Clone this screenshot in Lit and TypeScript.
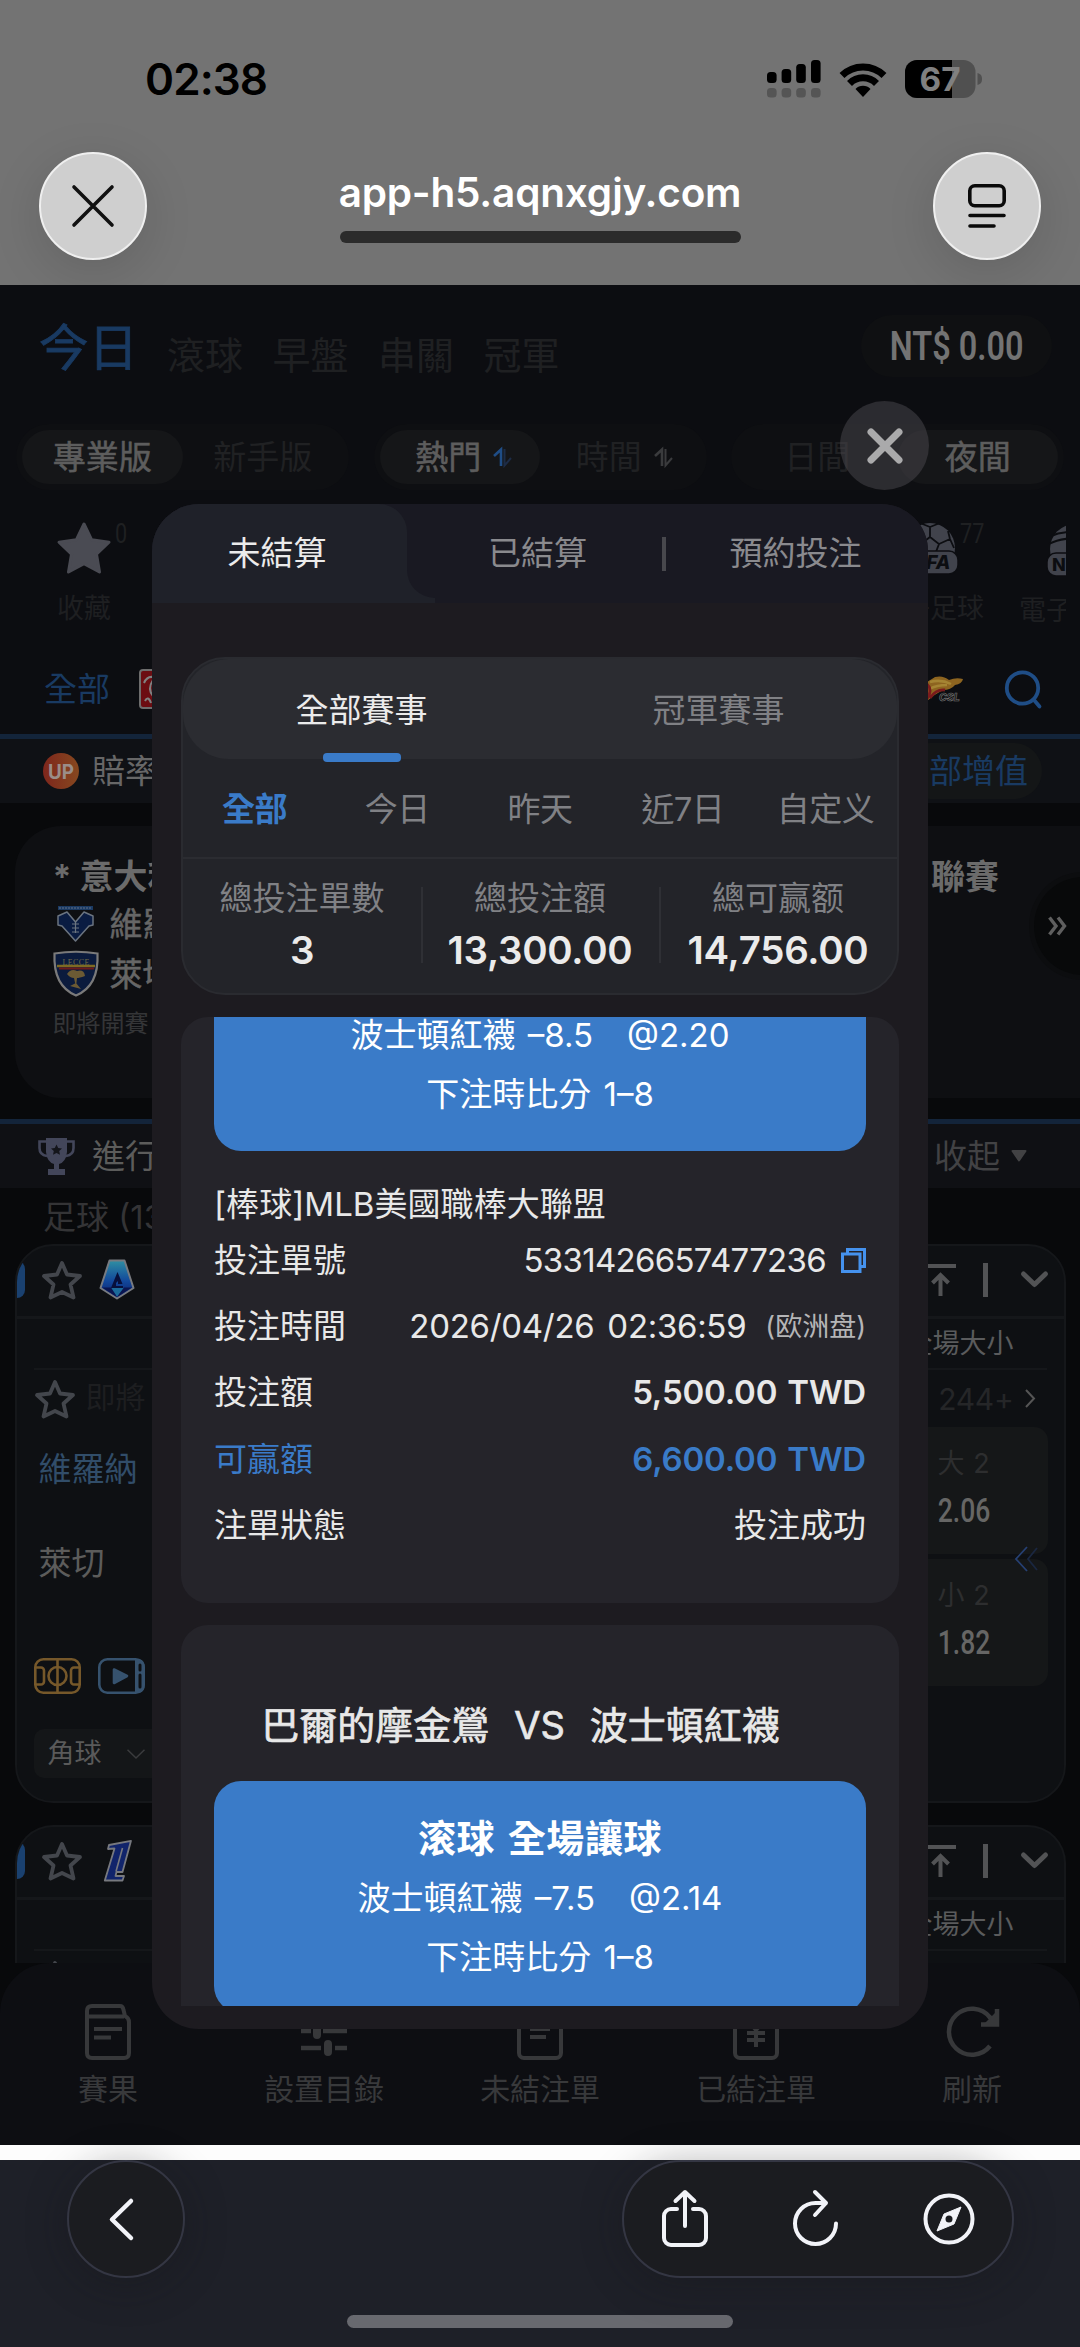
import { LitElement, html, svg, css, nothing } from "lit";
import { customElement, property } from "lit/decorators.js";

const base = css`
  * { box-sizing: border-box; }
  :host {
    display: block;
    font-family: Inter, "Noto Sans CJK TC", sans-serif;
    font-size: 33px;
    line-height: 1;
    white-space: nowrap;
  }
  svg { display: block; flex: none; overflow: visible; }
`;

/* ---------- Browser chrome, top ---------- */
@customElement("browser-top")
class BrowserTop extends LitElement {
  static styles = [base, css`
    :host { height: 285px; background: #737373; overflow: hidden; }
    .status { display: flex; align-items: center; height: 158px; padding: 0 98px 0 145px; justify-content: space-between; }
    .time { font-size: 44px; font-weight: 600; color: #000; letter-spacing: -0.9px; line-height: 48px; }
    .indicators { display: flex; align-items: center; gap: 18px; }
    .bar { display: flex; align-items: flex-start; justify-content: space-between; padding: 0 39px; margin-top: -6px; }
    .round {
      width: 108px; height: 108px; border-radius: 50%; background: #cfcfcf; border: 2px solid #efefef;
      display: flex; align-items: center; justify-content: center; box-shadow: 0 12px 50px rgba(0,0,0,.13);
    }
    .address { display: flex; flex-direction: column; align-items: center; width: 402px; padding-top: 17px; }
    .url { font-size: 40.500px; font-weight: 600; color: #fff; letter-spacing: -0.2px; line-height: 48px; }
    .progress { width: 401px; height: 12px; border-radius: 6px; background: #2b2b2b; margin-top: 14px; }
  `];
  render() {
    return html`
      <div class="status">
        <span class="time">02:38</span>
        <div class="indicators">
          <svg width="54" height="38" viewBox="0 0 54 38">
            ${[[0, 12], [14.6, 9], [29.2, 4], [44, 0]].map(([x, y]) => svg`
              <rect x=${x} y=${y} width="9.6" height=${23 - y} rx="3.5" fill="#000"/>
              <rect x=${x} y="28" width="9.6" height="9.5" rx="3.5" fill="#555"/>`)}
          </svg>
          <svg width="48" height="36" viewBox="0 0 48 36" fill="none" stroke="#000" stroke-width="7">
            <path d="M3 14.5A30 30 0 0 1 45 14.5"/>
            <path d="M10.5 22.5A19 19 0 0 1 37.5 22.5"/>
            <path d="M24 36L16.5 28A10.5 10.5 0 0 1 31.500 28Z" fill="#000" stroke="none"/>
          </svg>
          <svg width="77" height="38" viewBox="0 0 77 38">
            <rect width="70.500" height="38" rx="12" fill="#505050"/>
            <path d="M12 0H47V38H12A12 12 0 0 1 0 26V12A12 12 0 0 1 12 0Z" fill="#000"/>
            <path d="M72.500 13C76 14 77 16 77 19S76 24 72.500 25Z" fill="#505050"/>
            <text x="35" y="31" font-size="33" font-weight="700" fill="#808080" text-anchor="middle" textLength="41" lengthAdjust="spacingAndGlyphs">67</text>
          </svg>
        </div>
      </div>
      <div class="bar">
        <div class="round">
          <svg width="42" height="42" viewBox="0 0 42 42" stroke="#111" stroke-width="3.600" stroke-linecap="round"><path d="M2 2L40 40M40 2L2 40"/></svg>
        </div>
        <div class="address"><span class="url">app-h5.aqnxgjy.com</span><div class="progress"></div></div>
        <div class="round">
          <svg width="38" height="45" viewBox="0 0 38 45" fill="none" stroke="#0a0a0a" stroke-width="3.600" stroke-linecap="round">
            <rect x="1.800" y="1.800" width="34.400" height="20" rx="5"/><path d="M2 31.500H36M2 42H26"/>
          </svg>
        </div>
      </div>`;
  }
}

/* ---------- Browser chrome, bottom ---------- */
@customElement("browser-bottom")
class BrowserBottom extends LitElement {
  static styles = [base, css`
    :host { height: 202px; background: #1e2028; border-top: 15px solid #fdfdfd; }
    .tools { display: flex; justify-content: space-between; padding: 0 66px 0 67px; }
    .glass {
      height: 118px; border-radius: 59px; background: #1b1c20; border: 2px solid #343643;
      display: flex; align-items: center; box-shadow: 0 6px 40px rgba(20,20,24,.35);
    }
    .back { width: 118px; justify-content: center; padding-right: 10px; }
    .group { width: 392px; padding: 0 37px 0 38px; justify-content: space-between; }
    .home { width: 386px; height: 13px; border-radius: 7px; background: #68696f; margin: 37px auto 0; }
  `];
  render() {
    return html`
      <div class="tools">
        <div class="glass back">
          <svg width="25" height="43" viewBox="0 0 25 43" fill="none" stroke="#f2f3f8" stroke-width="4.500" stroke-linecap="round" stroke-linejoin="round"><path d="M22 3L3 21.500L22 40"/></svg>
        </div>
        <div class="glass group">
          <svg width="46" height="58" viewBox="0 0 46 58" fill="none" stroke="#f2f3f8" stroke-width="4" stroke-linecap="round" stroke-linejoin="round">
            <path d="M15 19H9A7 7 0 0 0 2 26V48A7 7 0 0 0 9 55H37A7 7 0 0 0 44 48V26A7 7 0 0 0 37 19H31M23 36V2.500M13.500 11L23 2L32.500 11"/>
          </svg>
          <svg width="46" height="58" viewBox="0 0 46 58" fill="none" stroke="#f2f3f8" stroke-width="4" stroke-linecap="round" stroke-linejoin="round">
            <path d="M43 33.500A20.500 20.500 0 1 1 22.500 13H33M22 2L33 13L22 25"/>
          </svg>
          <svg width="52" height="52" viewBox="0 0 52 52" fill="none" stroke="#f2f3f8" stroke-width="4">
            <circle cx="26" cy="26" r="23.500"/>
            <path d="M38 14L31 31L14 38L21 21Z" fill="#f2f3f8" stroke-width="1" stroke-linejoin="round"/>
            <circle cx="26" cy="26" r="3.500" fill="#1b1c20" stroke="none"/>
          </svg>
        </div>
      </div>
      <div class="home"></div>`;
  }
}

/* ---------- Icons of the sports page ---------- */
const STAR = "M25.500 2L33 17.500L50 19.800L37.700 31.500L40.700 49L25.500 40.800L10.300 49L13.300 31.500L1 19.800L18 17.500Z";
const starOutline = html`<svg width="42" height="40" viewBox="0 0 42 40" fill="none" stroke="#43464c" stroke-width="3.800" stroke-linejoin="round">
  <path d="M21 3L26 14.500L39 16L29.500 24.500L32.500 37.500L21 32L9.500 37.500L12.500 24.500L3 16L16 14.500Z"/></svg>`;
const sortIcon = (a: string, b: string) => html`<svg width="19" height="19" viewBox="0 0 19 19" fill="none" stroke-width="2.600">
  <path d="M1 8L8 1.500V18" stroke=${a}/><path d="M11.500 1V17.500L18 10" stroke=${b} stroke-width="2"/></svg>`;

/* ---------- League block with its first match ---------- */
@customElement("league-card")
class LeagueCard extends LitElement {
  @property() logo = "serie-a";
  @property({ type: Boolean }) cut = false;
  static styles = [base, css`
    :host { width: 1051px; height: 559px; margin-left: 14.500px; border: 2px solid #15171a; border-radius: 38px; background: #0e1013; overflow: hidden; flex: none; }
    :host([cut]) { height: 138px; border-radius: 38px 38px 0 0; border-bottom: 0; }
    .head { display: flex; align-items: center; height: 73px; padding-bottom: 3px; border-bottom: 3px solid #15171a; }
    .tab { width: 8px; height: 37px; background: #1a4170; border-radius: 0 8px 8px 0; }
    .star { margin-left: 16px; }
    .logo { margin-left: 16px; }
    .acts { display: flex; align-items: center; margin-left: auto; padding-right: 16px; }
    .up { margin-right: 27px; } .sep { width: 5px; height: 34px; background: #525355; margin-right: 33px; }
    .market { display: flex; justify-content: flex-end; align-items: center; height: 51px; margin: 0 17px; padding-right: 33px; border-bottom: 2px solid #15171a; color: #5a5b5c; font-size: 27px; }
    .info { display: flex; align-items: center; height: 57px; margin: 0 17px; padding-right: 12px; }
    .soon { font-size: 30px; color: #1d1e20; margin-left: 10px; padding-bottom: 4px; line-height: 40px; }
    .more { margin-left: auto; color: #252628; font-size: 30px; letter-spacing: -0.3px; padding-right: 11px; }
    .body { display: flex; justify-content: space-between; height: 259px; padding: 0 16px 0 22px; }
    .teams { display: grid; grid-template-rows: 84px 105px; align-items: center; }
    .home { color: #314d69; } .away { color: #5c5c5b; }
    .odds { display: flex; flex-direction: column; gap: 5px; width: 168px; }
    .cell { height: 127.500px; border-radius: 14px; background: #151718; display: flex; flex-direction: column; align-items: flex-start; padding: 22px 0 0 58px; gap: 16px; }
    .line { font-size: 27px; color: #2d2e2f; line-height: 30px; letter-spacing: .6px; }
    .price { font-family: Roboto, sans-serif; font-size: 34px; font-weight: 500; color: #666665; line-height: 30px; transform: scaleX(.78); width: 52px; display: flex; justify-content: center; }
    .media { display: flex; gap: 17px; padding: 0 0 0 17px; margin-top: -28px; }
    .corner { display: flex; align-items: center; justify-content: space-between; width: 150px; height: 49px; margin: 35px 0 0 17px; border-radius: 10px; background: #141618; padding: 0 39px 0 14px; font-size: 27px; color: #5a5a5a; }
  `];
  private logoArt() {
    return this.logo === "serie-a"
      ? html`<svg class="logo" width="36" height="41" viewBox="0 0 36 41">
          <defs><linearGradient id="a" x1="0" y1="0" x2="0" y2="1"><stop offset="0" stop-color="#2f8fa3"/><stop offset=".55" stop-color="#12479b"/><stop offset="1" stop-color="#0c1c66"/></linearGradient></defs>
          <path d="M10.500 1.500H25.500L34.500 29L18 39.500L1.500 29Z" fill="url(#a)" stroke="#777a80" stroke-width="2" stroke-linejoin="round"/>
          <path d="M18.500 13L23.500 25H19V22L17 24V27H24V29H12Z" fill="#07103c"/><path d="M12 29H25L18 38Z" fill="#1b6a9a"/><path d="M3 28.500H12L18 38Z" fill="#0a1550"/><path d="M33 28.500H25L18 38Z" fill="#0a1550"/>
        </svg>`
      : html`<svg class="logo" width="36" height="42" viewBox="-5 0 36 42">
          <path d="M5 5L27 .800L18.500 32H12.500L11.500 36H20L18.500 40.500H.800L10.500 8.500L4 9Z" fill="#11246b" stroke="#77797f" stroke-width="1.800" stroke-linejoin="round"/>
          <path d="M18.500 8L12 31.500" stroke="#77797f" stroke-width="1.600"/>
        </svg>`;
  }
  render() {
    return html`
      <div class="head">
        <div class="tab"></div><div class="star">${starOutline}</div>${this.logoArt()}
        <div class="acts">
          <svg class="up" width="31" height="32" viewBox="0 0 31 32" fill="none" stroke="#525355" stroke-width="4"><path d="M0 2H31M15.500 32V11M7.500 19L15.500 11L23.500 19" /></svg>
          <div class="sep"></div>
          <svg width="27" height="17" viewBox="0 0 27 17" fill="none" stroke="#525355" stroke-width="5" stroke-linecap="round" stroke-linejoin="round"><path d="M2.500 3L13.500 13.500L24.500 3"/></svg>
        </div>
      </div>
      <div class="market">全場大小</div>
      <div class="info">${starOutline}${this.cut ? nothing : html`<span class="soon">即將</span><span class="more">244+</span>
        <svg width="10" height="19" viewBox="0 0 10 19" fill="none" stroke="#555" stroke-width="2"><path d="M1 1L9 9.500L1 18"/></svg>`}</div>
      ${this.cut ? nothing : html`
        <div class="body">
          <div class="teams"><span class="home">維羅納</span><span class="away">萊切</span></div>
          <div class="odds">
            <div class="cell"><span class="line">大 2</span><span class="price">2.06</span></div>
            <div class="cell"><span class="line">小 2</span><span class="price">1.82</span></div>
          </div>
        </div>
        <div class="media">
          <svg width="47" height="36" viewBox="0 0 47 36" fill="none" stroke="#76582a" stroke-width="2.600">
            <rect x="1.300" y="1.300" width="44.400" height="33.400" rx="8"/><path d="M23.500 1V35M1 9.500H7A3 3 0 0 1 10 12.500V23.500A3 3 0 0 1 7 26.500H1M46 9.500H40A3 3 0 0 0 37 12.500V23.500A3 3 0 0 0 40 26.500H46"/><circle cx="23.500" cy="18" r="9"/>
          </svg>
          <svg width="47" height="36" viewBox="0 0 47 36" fill="none" stroke="#36526e" stroke-width="2.600">
            <rect x="1.300" y="1.300" width="44.400" height="33.400" rx="8"/><path d="M38 2H41Q46 3 45.700 10V27Q46 33 41 34H38Z" fill="#36526e" stroke-width="2"/><path d="M42 7V12M42 17V29" stroke="#0e1013" stroke-width="3" stroke-linecap="round"/><path d="M16 11.500L29 18L16 25Z" fill="#36526e" stroke-linejoin="round"/>
          </svg>
        </div>
        <div class="corner">角球<svg width="18" height="10" viewBox="0 0 18 10" fill="none" stroke="#3a3b3d" stroke-width="1.500"><path d="M.5 .8L9 9L17.500 .8"/></svg></div>`}
    `;
  }
}

/* ---------- Dimmed sports page ---------- */
@customElement("sports-page")
class SportsPage extends LitElement {
  static styles = [base, css`
    :host { height: 1860px; background: #08090b; overflow: hidden; display: flex; flex-direction: column; }
    .top { height: 449px; background: #0c0d11; flex: none; }
    .nav { display: flex; align-items: center; height: 125px; padding: 0 28px 0 39px; }
    .nav .on { font-size: 49.500px; color: #193a62; -webkit-text-stroke: .8px #193a62; margin: 2px 30px 0 0; width: 98px; }
    .nav .off { font-size: 38px; color: #1f2022; margin: 14px 29.500px 0 0; }
    .balance { margin: -3px 0 0 auto; width: 191px; height: 62px; border-radius: 31px; background: #0f1012; display: flex; align-items: center; justify-content: center; }
    .balance span { font-family: Roboto, sans-serif; font-weight: 600; font-size: 41px; color: #737373; transform: scaleX(.79); }
    .modes { display: flex; align-items: center; height: 66px; margin-top: 14px; padding: 0 16px; justify-content: space-between; }
    .seg { display: flex; width: 333px; height: 66px; border-radius: 33px; background: #0e0f12; padding: 6px; }
    .seg div { flex: 1; height: 54px; border-radius: 27px; display: flex; align-items: center; justify-content: center; gap: 12px; color: #202123; }
    .seg .on { background: #151618; color: #5d5d5d; -webkit-text-stroke: .6px #5d5d5d; }
    .sort div { padding-left: 8px; }
    .sports { display: flex; justify-content: space-between; height: 154px; padding: 32px 14px 0 14px; }
    .sport { display: flex; flex-direction: column; align-items: center; position: relative; font-size: 27px; color: #1e1f21; gap: 20px; width: 140px; flex: none; }
    .sport .n { position: absolute; left: 101px; top: 0; font-size: 27px; font-family: Roboto; transform: scaleX(.8); transform-origin: 0 0; color: #1f2022; line-height: 24px; }
    .sport svg { margin-bottom: 1px; }
    .right { display: flex; width: 207px; overflow: hidden; }
    .right .sport { width: 142px; } .right .n { left: 101px; }
    .right .next-sport { align-items: flex-start; padding-left: 18px; }
    .next-sport svg { margin-left: 28px; }
    .leagues { display: flex; align-items: center; height: 90px; padding: 0 38px 0 44px; color: #193a62; }
    .leagues .red { margin: 0 auto 0 29px; }
    .leagues .find { margin-left: 41px; }
    .rule { height: 5px; background: #13243a; flex: none; }
    .boost { display: flex; align-items: center; height: 64px; background: #0f1115; flex: none; padding: 0 38px 0 42px; color: #676767; }
    .boost span { margin-left: 12px; }
    .boost .all { margin-left: auto; height: 56px; border-radius: 28px; background: #141617; color: #193a62; display: flex; align-items: center; padding: 0 14px; width: 140px; justify-content: flex-end; }
    .hot { height: 272px; margin: 23px 0 21px 14.500px; background: #0e0f12; border-radius: 46px 0 0 46px; padding: 33px 0 0 38px; position: relative; flex: none; }
    .hot .title { display: flex; height: 36px; align-items: center; color: #6b6b6b; font-size: 34px; font-weight: 700; padding-right: 81px; justify-content: space-between; margin-bottom: 4px; }
    .team { display: flex; align-items: center; height: 50px; font-size: 33px; color: #666; -webkit-text-stroke: .5px #666; }
    .team svg { margin-right: 11px; }
    .hot .soon { font-size: 24px; color: #343537; margin-top: 9px; line-height: 32px; }
    .next { position: absolute; right: -52px; top: 51px; width: 98px; height: 98px; border-radius: 50%; background: #08090a; box-shadow: 0 0 0 5px #0c0d0f; padding: 39px 0 0 14px; }
    .section { display: flex; align-items: center; height: 64px; background: #0f1014; flex: none; padding: 0 53px 0 38px; color: #5c5c5b; }
    .section .name { margin-left: 17px; }
    .section .fold { margin-left: auto; color: #424244; display: flex; align-items: center; gap: 11px; }
    .count { height: 56px; display: flex; align-items: center; padding: 2px 0 0 43px; color: #343436; flex: none; font-size: 33px; }
    .gap { height: 22px; flex: none; }
    .tabs { flex: none; height: 183px; background: #0d0e12; border-radius: 50px 50px 0 0; display: grid; grid-template-columns: repeat(5, 1fr); padding-top: 41px; }
    .tabs div { display: flex; flex-direction: column; align-items: center; gap: 12px; font-size: 30px; color: #38393b; line-height: 34px; letter-spacing: -.1px; }
  `];
  render() {
    const ic = "#37383a";
    return html`
      <div class="top">
        <div class="nav">
          <span class="on">今日</span><span class="off">滾球</span><span class="off">早盤</span><span class="off">串關</span><span class="off">冠軍</span>
          <div class="balance"><span>NT$ 0.00</span></div>
        </div>
        <div class="modes">
          <div class="seg"><div class="on">專業版</div><div>新手版</div></div>
          <div class="seg sort"><div class="on">熱門${sortIcon("#1f4d86", "#1d2c46")}</div><div>時間${sortIcon("#3a3b3d", "#3a3b3d")}</div></div>
          <div class="seg"><div>日間</div><div class="on">夜間</div></div>
        </div>
        <div class="sports">
          <div class="sport">
            <svg width="52" height="52" viewBox="0 0 51 51"><path d=${STAR} fill="#4a4b53" stroke="#4a4b53" stroke-width="3" stroke-linejoin="round"/></svg>
            收藏<span class="n">0</span>
          </div>
          <div class="right">
            <div class="sport">
              <svg width="56" height="52" viewBox="0 0 56 52">
                <circle cx="28" cy="26" r="25" fill="#41434c"/>
                <g fill="none" stroke="#0c0d11" stroke-width="1.800"><path d="M28 15L37 22L33.500 31H22L19 22ZM28 15V5M37 22L48 17M19 22L8 17M28 5L18 1M28 5L38 1M48 17L52 26M48 17L46 9M8 17L4 26M8 17L10 9"/></g>
                <rect x="0" y="29" width="56" height="23" rx="9" fill="#41434c" stroke="#0c0d11" stroke-width="1.500"/>
                <text x="28" y="47" text-anchor="middle" font-size="19" font-weight="800" font-style="italic" fill="#0c0d11">FIFA</text>
              </svg>
              電子足球<span class="n">77</span>
            </div>
            <div class="sport next-sport">
              <svg width="56" height="54" viewBox="0 0 56 54">
                <circle cx="28" cy="27" r="25" fill="#41434c"/>
                <path d="M2 22Q20 12 54 20M4 14Q22 6 50 14" fill="none" stroke="#0c0d11" stroke-width="2"/>
                <rect x="0" y="31" width="56" height="23" rx="9" fill="#41434c" stroke="#0c0d11" stroke-width="1.500"/>
                <text x="5" y="49" font-size="18" font-weight="800" fill="#0c0d11">NB</text>
              </svg>
              電子
            </div>
          </div>
        </div>
        <div class="leagues">
          <span>全部</span>
          <svg class="red" width="36" height="40" viewBox="0 0 36 40"><rect x="1" y="1" width="34" height="38" rx="3" fill="#6c0d12" stroke="#6d6d6d" stroke-width="2"/><path d="M5 14Q8 7 14 8M6 32Q9 26 12 34M14 11Q8 20 14 27" fill="none" stroke="#808080" stroke-width="2"/></svg>
          <svg width="37" height="26" viewBox="0 0 37 26">
            <path d="M0 6Q5 3 8 1Q16 -1 22 4Q29 1 36 3Q35 8 28 9Q24 14 16 14Q8 18 0 25Z" fill="#8d6420"/>
            <path d="M3 6Q14 3 24 8M2 13Q10 9 20 9" stroke="#a58433" stroke-width="2.500" fill="none"/>
            <path d="M0 8Q6 14 0 23M3 22Q9 13 18 14" stroke="#7b1a1c" stroke-width="2.800" fill="none"/>
            <text x="12" y="25" font-size="10.500" font-weight="800" font-style="italic" fill="#111" stroke="#777" stroke-width=".6">CSL</text>
          </svg>
          <svg class="find" width="37" height="39" viewBox="0 0 37 39" fill="none" stroke="#1f4d86" stroke-width="3.800" stroke-linecap="round"><circle cx="17.500" cy="18" r="15.700"/><path d="M29 30L34.500 36.500"/></svg>
        </div>
      </div>
      <div class="rule"></div>
      <div class="boost">
        <svg width="38" height="38" viewBox="0 0 38 38">
          <defs><linearGradient id="u" x1="0" y1="0" x2="1" y2="0"><stop offset="0" stop-color="#7e261c"/><stop offset="1" stop-color="#86481f"/></linearGradient></defs>
          <circle cx="19" cy="19" r="18" fill="url(#u)"/><text x="19" y="26.500" font-size="20" font-weight="700" fill="#9a8d88" text-anchor="middle" textLength="26" lengthAdjust="spacingAndGlyphs">UP</text>
        </svg>
        <span>賠率</span><div class="all">部增值</div>
      </div>
      <div class="hot">
        <div class="title"><span>* 意大利</span><span>聯賽</span></div>
        <div class="team">
          <svg width="46" height="36" viewBox="0 0 46 36">
            <rect x="5" y="0" width="35" height="4" fill="#1a3a63"/><path d="M6 2H39" stroke="#62708a" stroke-width="1.200" stroke-dasharray="2 1"/>
            <path d="M14 6L22.500 16L31 6L40 10V19L36 20L22.500 35L9 20L5 19V10Z" fill="#0a1c42" stroke="#6b7480" stroke-width="1.500" stroke-linejoin="round"/>
            <path d="M22.500 16V27M19 18H26M19 22H26M19 26H26" stroke="#6b7480" stroke-width="1.200"/>
          </svg>維羅
        </div>
        <div class="team">
          <svg width="46" height="46" viewBox="0 0 46 46">
            <path d="M1.500 2.500Q23-1 44.500 2.500Q46 35 23 44.500Q0 35 1.500 2.500Z" fill="#0b1b3d" stroke="#7a7a7a" stroke-width="2.200"/>
            <path d="M4 15H42" stroke="#7d6a22" stroke-width="2.500"/><path d="M6 17.500H41" stroke="#6c1b1b" stroke-width="2"/>
            <text x="23" y="13.500" font-family="Liberation Serif" font-size="8" fill="#6e6a4a" text-anchor="middle" textLength="27">LECCE</text>
            <path d="M14 23Q18 17 24 20Q31 18 32 25Q26 27 24 27L23 36L21 27Q17 27 14 23ZM17 35L23 32L28 38" fill="#6b5a34"/>
          </svg>萊切
        </div>
        <div class="soon">即將開賽</div>
        <div class="next"><svg width="19" height="20" viewBox="0 0 19 20" fill="none" stroke="#5f5f5f" stroke-width="3.400"><path d="M1.500 1.500L8 10L1.500 18.500M10 1.500L16.500 10L10 18.500"/></svg></div>
      </div>
      <div class="rule"></div>
      <div class="section">
        <svg width="37" height="37" viewBox="0 0 37 37" fill="#43465a">
          <path d="M8 0H29V14Q28 24 21 26V31H27V37H10V31H16V26Q9 24 8 14Z"/><path d="M8 3.500H1.500V10Q1.500 17 9 18M29 3.500H35.500V10Q35.500 17 28 18" fill="none" stroke="#43465a" stroke-width="2.600"/>
          <path d="M18.500 6.500L20.200 10L24 10.400L21.200 13L22 16.800L18.500 15L15 16.800L15.800 13L13 10.400L16.800 10Z" fill="#14151b"/>
        </svg>
        <span class="name">進行</span>
        <span class="fold">收起<svg width="16" height="12" viewBox="0 0 16 12"><path d="M1.500 1H14.500L8 10.500Z" fill="#424244" stroke="#424244" stroke-width="2" stroke-linejoin="round"/></svg></span>
      </div>
      <div class="count">足球 (13</div>
      <league-card></league-card>
      <div class="gap"></div>
      <league-card logo="ligue-1" cut></league-card>
      <div class="tabs">
        <div><svg width="46" height="56" viewBox="0 0 46 56" fill="none" stroke=${ic} stroke-width="4"><path d="M7 2H35Q38 2 38.500 6L40 12Q44 14 44 18V49Q44 54 39 54H7Q2 54 2 49V7Q2 2 7 2ZM3 12.500H39M9 25H37M9 33.500H26"/></svg>賽果</div>
        <div><svg width="46" height="56" viewBox="0 0 46 56" fill="none" stroke=${ic} stroke-width="4.500"><path d="M0 11H12M20 11H46M0 27H10M22 27H46M0 44H20M34 44H46"/><path d="M16 22V31M27 40V48" stroke-width="8" stroke-linecap="round"/></svg>設置目錄</div>
        <div><svg width="46" height="56" viewBox="0 0 46 56" fill="none" stroke=${ic} stroke-width="4"><rect x="2" y="2" width="42" height="52" rx="5"/><path d="M13 25H33M13 33H29"/></svg>未結注單</div>
        <div><svg width="46" height="56" viewBox="0 0 46 56" fill="none" stroke=${ic} stroke-width="4"><rect x="2" y="2" width="42" height="52" rx="5"/><path d="M23 20V43M14 29H32M14 36H32M15 17L23 26L31 17"/></svg>已結注單</div>
        <div><svg width="54" height="56" viewBox="0 0 54 56" fill="none" stroke=${ic} stroke-width="4.500"><path d="M45 42A23 23 0 1 1 45 13.500L51 19M52 5V20.500H36"/><path d="M51 8V19H40Z" fill=${ic} stroke="none"/></svg>刷新</div>
      </div>`;
  }
}

/* ---------- Bet history dialog ---------- */
@customElement("bet-dialog")
class BetDialog extends LitElement {
  static styles = [base, css`
    :host { width: 776px; height: 1525px; border-radius: 47px; background: #1d1b20; color: #e8e8e8; overflow: hidden; }
    .heads { height: 99px; background: #191922; position: relative; display: grid; grid-template-columns: 250px 271px 245px; }
    .heads svg { position: absolute; left: 0; top: 0; }
    .heads div { display: flex; align-items: center; justify-content: center; color: #8a8a8e; position: relative; }
    .heads .on { color: #ebebeb; }
    .heads i { position: absolute; left: 510px; top: 33px; width: 4px; height: 34px; background: #48484d; }
    .filter { margin: 54px 29px 0; height: 338px; border: 2px solid #2a2b30; border-radius: 44px; background: #232429; display: flex; flex-direction: column; }
    .kinds { display: flex; height: 100px; background: #2b2c31; border-radius: 46px; }
    .kinds div { flex: 1; display: flex; align-items: center; justify-content: center; color: #808185; position: relative; padding-top: 3px; }
    .kinds .on { color: #ebebeb; }
    .kinds .on::after { content: ""; position: absolute; left: 50%; margin-left: -39px; bottom: -3px; width: 78px; height: 9px; border-radius: 4px; background: #3a7bc8; }
    .days { display: grid; grid-template-columns: repeat(5, 1fr); height: 100px; border-bottom: 2px solid #2b2c31; align-items: center; text-align: center; color: #808185; letter-spacing: -.5px; padding: 2px 0 0; }
    .days .on { color: #3a7bc8; font-weight: 700; }
    .sums { display: grid; grid-template-columns: repeat(3, 1fr); padding: 22px 0 0; }
    .sums div { display: flex; flex-direction: column; align-items: center; position: relative; gap: 12px; color: #808185; line-height: 34px; height: 82px; }
    .sums div + div::before { content: ""; position: absolute; left: 0; top: 6px; height: 76px; width: 2px; background: #2f3035; }
    .sums b { font-size: 38.500px; font-weight: 600; color: #ebebeb; line-height: 46px; letter-spacing: -.3px; }
    .list { margin: 22px 29px 0; height: 989px; overflow: hidden; border-radius: 27px 27px 0 0; display: flex; flex-direction: column; gap: 22px; justify-content: flex-start; }
    .card { background: #25242a; border-radius: 27px; padding: 0 33px; flex: none; }
    .first { height: 586px; border-radius: 0 0 27px 27px; }
    .second { height: 500px; padding-top: 71px; }
    .pick { background: #3a7bc8; border-radius: 27px; color: #fff; text-align: center; line-height: 59px; height: 232px; padding-top: 28px; display: flow-root; word-spacing: 3px; }
    .first .pick { height: 134px; border-radius: 0 0 27px 27px; padding-top: 0; }
    .first .pick div:first-child { margin-top: -11px; }
    .pick .kind { font-size: 38px; font-weight: 700; line-height: 58px; margin-bottom: 2px; letter-spacing: .6px; }
    .pick .n { letter-spacing: 0; }
    .pick .od { margin-left: 34px; }
    .league { margin-top: 34px; line-height: 38px; letter-spacing: .05px; }
    .row { display: flex; align-items: center; justify-content: space-between; height: 66.300px; }
    .rows { margin-top: 4px; }
    .num { letter-spacing: -.7px; display: flex; align-items: center; gap: 15px; }
    .when { letter-spacing: -.3px; word-spacing: 4px; }
    .zone { font-size: 27px; color: #b5b5b7; letter-spacing: 0; margin-left: 4px; }
    .money { font-weight: 600; letter-spacing: -.2px; word-spacing: 2px; }
    .win { color: #3a7bc8; }
    .teams { display: flex; justify-content: center; gap: 25px; font-size: 38px; line-height: 58px; margin-bottom: 27px; -webkit-text-stroke: .7px #e8e8e8; padding-right: 39px; }
  `];
  private pick(line: string, odds: string) {
    return html`<div>波士頓紅襪 <span class="n">${line}</span><span class="n od">${odds}</span></div><div>下注時比分 <span class="n">1–8</span></div>`;
  }
  render() {
    return html`
      <div class="heads">
        <svg width="284" height="99" viewBox="0 0 284 99"><path d="M0 0H227A28 28 0 0 1 255 28V66A28 28 0 0 0 283 94V99H0Z" fill="#1f2129"/></svg>
        <div class="on">未結算</div><div>已結算</div><div>預約投注</div><i></i>
      </div>
      <div class="filter">
        <div class="kinds"><div class="on">全部賽事</div><div>冠軍賽事</div></div>
        <div class="days"><span class="on">全部</span><span>今日</span><span>昨天</span><span>近7日</span><span>自定义</span></div>
        <div class="sums">
          <div>總投注單數<b>3</b></div><div>總投注額<b>13,300.00</b></div><div>總可赢额<b>14,756.00</b></div>
        </div>
      </div>
      <div class="list">
        <div class="card first">
          <div class="pick">${this.pick("–8.5", "@2.20")}</div>
          <div class="league">[棒球]MLB美國職棒大聯盟</div>
          <div class="rows">
            <div class="row"><span>投注單號</span><span class="num">5331426657477236
              <svg width="25" height="25" viewBox="0 0 25 25" fill="none" stroke="#4592ee" stroke-width="3"><rect x="1.500" y="6" width="17.500" height="17.500"/><path d="M6.500 6V1.500H23.500V18.500H19"/></svg></span></div>
            <div class="row"><span>投注時間</span><span class="num when">2026/04/26 02:36:59<span class="zone">(欧洲盘)</span></span></div>
            <div class="row"><span>投注額</span><span class="money">5,500.00 TWD</span></div>
            <div class="row win"><span>可贏額</span><span class="money">6,600.00 TWD</span></div>
            <div class="row"><span>注單狀態</span><span>投注成功</span></div>
          </div>
        </div>
        <div class="card second">
          <div class="teams"><span>巴爾的摩金鶯</span><span>VS</span><span>波士頓紅襪</span></div>
          <div class="pick"><div class="kind">滚球 全場讓球</div>${this.pick("–7.5", "@2.14")}</div>
        </div>
      </div>`;
  }
}

@customElement("app-root")
class AppRoot extends LitElement {
  static styles = [base, css`
    :host { position: relative; width: 1080px; height: 2347px; overflow: hidden; background: #08090b; }
    .dialog { position: absolute; left: 152px; top: 504px; }
    .close {
      position: absolute; left: 840px; top: 401px; width: 89px; height: 89px; border-radius: 50%;
      background: rgba(72,71,76,.52); display: flex; align-items: center; justify-content: center;
    }
    .swipe { position: absolute; left: 1015px; top: 1546px; }
  `];
  render() {
    return html`
      <browser-top></browser-top>
      <sports-page></sports-page>
      <browser-bottom></browser-bottom>
      <svg class="swipe" width="23" height="26" viewBox="0 0 23 26" fill="none" stroke-width="1.800"><path d="M12 1L1 13L12 25" stroke="#264073"/><path d="M22 2L13 13L22 24" stroke="#1a2740"/></svg>
      <bet-dialog class="dialog"></bet-dialog>
      <div class="close"><svg width="36" height="36" viewBox="0 0 36 36" stroke="#aaaaab" stroke-width="7" stroke-linecap="round"><path d="M4 4L32 32M32 4L4 32"/></svg></div>`;
  }
}
